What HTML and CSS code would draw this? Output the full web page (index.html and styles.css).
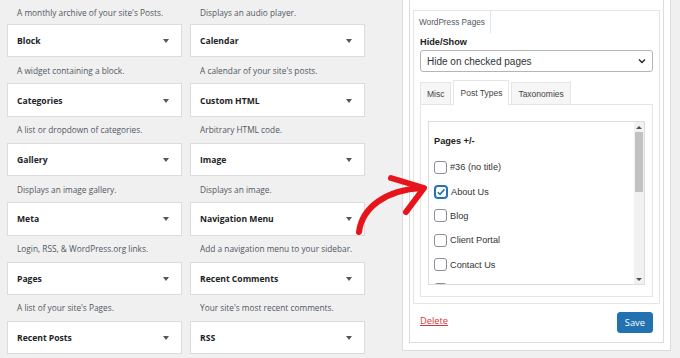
FILE: index.html
```html
<!DOCTYPE html>
<html lang="en">
<head>
  <meta charset="UTF-8">
  <title>Widgets</title>
  <link rel="stylesheet" href="styles.css">
</head>
<body>
  <div class="page">
    <div class="widgets">
      <p class="desc">A monthly archive of your site's Posts.</p>
      <p class="desc">Displays an audio player.</p>
      <div class="widget"><span>Block</span><i class="caret"></i></div>
      <div class="widget"><span>Calendar</span><i class="caret"></i></div>
      <p class="desc">A widget containing a block.</p>
      <p class="desc">A calendar of your site's posts.</p>
      <div class="widget"><span>Categories</span><i class="caret"></i></div>
      <div class="widget"><span>Custom HTML</span><i class="caret"></i></div>
      <p class="desc">A list or dropdown of categories.</p>
      <p class="desc">Arbitrary HTML code.</p>
      <div class="widget"><span>Gallery</span><i class="caret"></i></div>
      <div class="widget"><span>Image</span><i class="caret"></i></div>
      <p class="desc">Displays an image gallery.</p>
      <p class="desc">Displays an image.</p>
      <div class="widget"><span>Meta</span><i class="caret"></i></div>
      <div class="widget"><span>Navigation Menu</span><i class="caret"></i></div>
      <p class="desc">Login, RSS, &amp; WordPress.org links.</p>
      <p class="desc">Add a navigation menu to your sidebar.</p>
      <div class="widget"><span>Pages</span><i class="caret"></i></div>
      <div class="widget"><span>Recent Comments</span><i class="caret"></i></div>
      <p class="desc">A list of your site's Pages.</p>
      <p class="desc">Your site's most recent comments.</p>
      <div class="widget"><span>Recent Posts</span><i class="caret"></i></div>
      <div class="widget"><span>RSS</span><i class="caret"></i></div>
    </div>

    <aside class="sidebar">
      <div class="widget-inside">
        <div class="tabs">
          <div class="tab-head"><span class="tab">WordPress Pages</span></div>
          <div class="tab-body">
            <label class="field-label" for="hideShow">Hide/Show</label>
            <div class="select" id="hideShow">
              <span>Hide on checked pages</span>
              <svg width="8" height="6" viewBox="0 0 8 6"><path d="M1 1.5 L4 4.5 L7 1.5" fill="none" stroke="#222" stroke-width="1.4"/></svg>
            </div>
            <div class="subtabs">
              <span class="subtab">Misc</span>
              <span class="subtab active">Post Types</span>
              <span class="subtab">Taxonomies</span>
            </div>
            <div class="subpanel">
              <div class="checklist">
                <div class="list">
                  <p class="list-title">Pages +/-</p>
                  <label class="item"><span class="box"></span>#36 (no title)</label>
                  <label class="item"><span class="box checked"><svg width="10" height="10" viewBox="0 0 10 10"><path d="M1.8 5.2 L4 7.4 L8.4 2.4" fill="none" stroke="#2271b1" stroke-width="1.6"/></svg></span>About Us</label>
                  <label class="item"><span class="box"></span>Blog</label>
                  <label class="item"><span class="box"></span>Client Portal</label>
                  <label class="item"><span class="box"></span>Contact Us</label>
                  <label class="item"><span class="box"></span>Contact Me</label>
                </div>
                <div class="scrollbar">
                  <span class="arrow up"></span>
                  <div class="track"><span class="thumb"></span></div>
                  <span class="arrow down"></span>
                </div>
              </div>
            </div>
          </div>
        </div>
        <div class="actions">
          <a href="#" class="delete">Delete</a>
          <button class="save">Save</button>
        </div>
      </div>
    </aside>
  </div>

  <svg class="pointer" width="680" height="358" viewBox="0 0 680 358">
    <path d="M359 232 C362 208, 385 190, 422 188" fill="none" stroke="#e8141b" stroke-width="6" stroke-linecap="round"/>
    <path d="M391 178 L424 188 L406 212" fill="none" stroke="#e8141b" stroke-width="6" stroke-linecap="round" stroke-linejoin="round"/>
  </svg>
</body>
</html>
```

FILE: styles.css
```css
body {
  margin: 0;
  background: #f0f0f1;
  font-family: 'Open Sans', sans-serif;
  color: #1d2327;
  overflow: hidden;
}
.page {
  display: flex;
  align-items: flex-start;
  padding-left: 7px;
}
.widgets {
  display: grid;
  grid-template-columns: 175px 175px;
  grid-template-rows: 24px repeat(5, 33.4px 26px) 33.4px;
  column-gap: 8px;
}
.desc {
  margin: 0;
  padding-left: 10px;
  display: flex;
  align-items: center;
  font-size: 8.3px;
  color: #50575e;
}
.widget {
  background: white;
  border: 1px solid #dcdcde;
  display: flex;
  align-items: center;
  justify-content: space-between;
  padding: 1px 12px 0 9px;
  font-size: 8.6px;
  font-weight: 700;
}
.caret {
  width: 0;
  height: 0;
  border-left: 3px solid transparent;
  border-right: 3px solid transparent;
  border-top: 4px solid #50575e;
}

/* sidebar widget */
.sidebar {
  margin-left: 37px;
  width: 255px;
  background: white;
  border: 1px solid #dcdcde;
  border-top: none;
  padding: 0 6px 7px;
}
.widget-inside {
  border: 1px solid #dcdcde;
  border-top: none;
  padding: 10px 3px 0;
  font-family: 'Liberation Sans', Arial, sans-serif;
}
.tabs {
  border: 1px solid #e5e5e5;
}
.tab-head {
  display: flex;
  height: 22px;
}
.tab {
  display: flex;
  align-items: center;
  padding: 0 5px;
  border-right: 1px solid #e5e5e5;
  font-size: 8.2px;
  color: #50575e;
}
.tab-body {
  padding: 0 6px 6px;
  display: flex;
  flex-direction: column;
}
.field-label {
  margin-top: 3px;
  line-height: 13px;
  font-size: 9.2px;
  font-weight: bold;
  color: #222;
}
.select {
  margin-top: 1px;
  height: 20px;
  border: 1px solid #b4b4b4;
  border-radius: 3px;
  display: flex;
  align-items: center;
  justify-content: space-between;
  padding: 0 6px 0 6px;
  font-size: 10px;
  color: #2c3338;
}
.subtabs {
  display: flex;
  align-items: flex-end;
  gap: 2px;
  margin-top: 8px;
  height: 25px;
}
.subtab {
  height: 22px;
  display: flex;
  align-items: center;
  padding: 0 6px;
  border: 1px solid #e5e5e5;
  border-bottom: none;
  background: #f6f6f6;
  font-size: 8.5px;
  color: #444;
}
.subtab.active {
  height: 24px;
  background: white;
  position: relative;
  z-index: 1;
}
.subpanel {
  border: 1px solid #e5e5e5;
  margin-top: -1px;
  padding: 16px 7px 11px;
}
.checklist {
  height: 162px;
  border: 1px solid #dcdcde;
  display: flex;
}
.list {
  flex: 1;
  overflow: hidden;
  padding-left: 5px;
}
.list-title {
  margin: 12px 0 7px;
  line-height: 14px;
  font-size: 9.2px;
  font-weight: bold;
  color: #222;
}
.item {
  height: 24.4px;
  display: flex;
  align-items: center;
  gap: 3px;
  font-size: 9.2px;
  color: #333;
}
.box {
  width: 11px;
  height: 11px;
  border: 1px solid #8c8f94;
  border-radius: 3px;
  background: white;
  display: flex;
  align-items: center;
  justify-content: center;
  flex-shrink: 0;
}
.box.checked {
  border-color: #2271b1;
  box-shadow: 0 0 0 1px #2271b1;
  width: 10px;
  height: 10px;
  margin: 0 1px 0 1px;
}
.scrollbar {
  width: 10px;
  background: #f1f1f1;
  display: flex;
  flex-direction: column;
}
.arrow {
  height: 10px;
  display: flex;
  align-items: center;
  justify-content: center;
}
.arrow::before {
  content: "";
  border-left: 3px solid transparent;
  border-right: 3px solid transparent;
}
.arrow.up::before {
  border-bottom: 3px solid #505050;
}
.arrow.down::before {
  border-top: 3px solid #505050;
}
.track {
  flex: 1;
}
.thumb {
  display: block;
  height: 60px;
  margin: 0 1px;
  background: #c1c1c1;
}
.actions {
  display: flex;
  justify-content: space-between;
  align-items: flex-start;
  padding: 8px 7px 9px;
  font-family: 'Open Sans', sans-serif;
}
.delete {
  margin-top: 2px;
  font-size: 9.3px;
  color: #d63638;
}
.save {
  height: 21px;
  padding: 0 7px;
  border: 1px solid #2271b1;
  border-radius: 3px;
  background: #2271b1;
  color: white;
  font-family: 'Open Sans', sans-serif;
  font-size: 9.3px;
}
.pointer {
  position: absolute;
  top: 0;
  left: 0;
  pointer-events: none;
}
```
